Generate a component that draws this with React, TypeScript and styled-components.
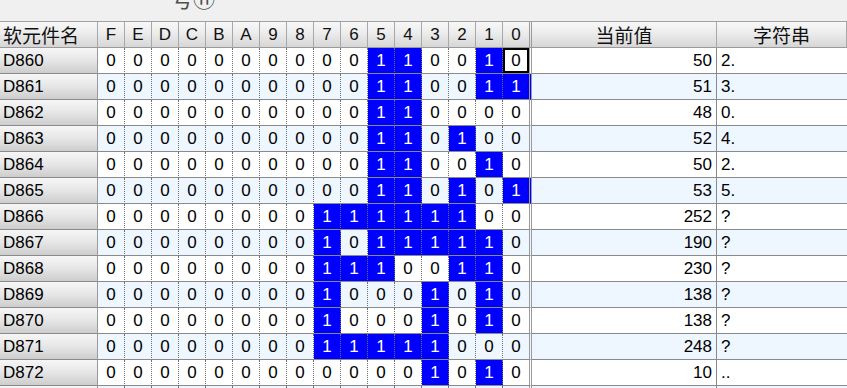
import React from "react";
import styled, { createGlobalStyle, css } from "styled-components";

const Global = createGlobalStyle`
  html, body { margin: 0; padding: 0; background: #f0f0f0; }
  body { font-family: "Liberation Sans", Arial, "Noto Sans CJK SC", sans-serif; overflow: hidden; }
`;

const Page = styled.div`
  width: 847px;
  height: 388px;
  overflow: hidden;
  display: flex;
  flex-direction: column;
`;

const TopStrip = styled.div`
  height: 21px;
  flex: 0 0 21px;
  overflow: hidden;
  background: #f0f0f0;
  border-bottom: 1px solid #a0a0a0;
`;

const Caption = styled.div`
  margin-top: -15px;
  padding-left: 171px;
  font-family: "Noto Sans CJK SC", sans-serif;
  font-size: 22px;
  line-height: 24px;
  color: #505050;
`;

const Grid = styled.div`
  display: grid;
  grid-template-columns: 98px repeat(15, 27px) 29px 185px 1fr;
  grid-auto-rows: 26px;
  background: #fff;
  font-size: 17px;
  color: #000;
`;

const headGrad = css`
  background: linear-gradient(#f8f8f8 0%, #ececec 45%, #d6d6d6 100%);
`;

const HeadCell = styled.div<{ $last?: boolean; $cjk?: boolean; $left?: boolean }>`
  ${headGrad};
  box-sizing: border-box;
  border-bottom: 1px solid #9a9a9a;
  border-right: ${(p) => (p.$last ? "3px double #9a9a9a" : "1px solid #a8a8a8")};
  display: flex;
  align-items: center;
  justify-content: ${(p) => (p.$left ? "flex-start" : "center")};
  padding-left: ${(p) => (p.$left ? "3px" : "0")};
  font-family: ${(p) =>
    p.$cjk ? `"Noto Sans CJK SC", sans-serif` : `"Liberation Sans", Arial, sans-serif`};
  font-size: ${(p) => (p.$cjk ? "19px" : "17px")};
  color: #111;
  white-space: nowrap;
  overflow: hidden;
`;

const LabelCell = styled.div`
  background: linear-gradient(#f6f6f6 0%, #e6e6e6 50%, #cdcdcd 100%);
  box-sizing: border-box;
  border-bottom: 1px solid #8a8a8a;
  border-right: 1px solid #9a9a9a;
  display: flex;
  align-items: center;
  padding-left: 3px;
`;

const BitCell = styled.div<{ $on: boolean; $alt: boolean; $last?: boolean; $sel?: boolean }>`
  box-sizing: border-box;
  background: ${(p) => (p.$on ? "#0000ff" : p.$alt ? "#eef6ff" : "#ffffff")};
  color: ${(p) => (p.$on ? "#ffffff" : "#000000")};
  border-bottom: 1px solid #8a8a8a;
  border-right: ${(p) => (p.$last ? "3px double #9a9a9a" : "1px dotted #707070")};
  display: flex;
  align-items: center;
  justify-content: center;
  box-shadow: ${(p) => (p.$sel ? "inset 0 0 0 2px #000" : "none")};
`;

const ValueCell = styled.div<{ $alt: boolean }>`
  box-sizing: border-box;
  background: ${(p) => (p.$alt ? "#eef6ff" : "#ffffff")};
  border-bottom: 1px solid #8a8a8a;
  border-right: 1px solid #8a8a8a;
  display: flex;
  align-items: center;
  justify-content: flex-end;
  padding-right: 4px;
`;

const StrCell = styled.div<{ $alt: boolean }>`
  box-sizing: border-box;
  background: ${(p) => (p.$alt ? "#eef6ff" : "#ffffff")};
  border-bottom: 1px solid #8a8a8a;
  display: flex;
  align-items: center;
  padding-left: 4px;
`;

const bitLabels = ["F", "E", "D", "C", "B", "A", "9", "8", "7", "6", "5", "4", "3", "2", "1", "0"];

type Row = { name: string; value: number | null; str: string };

const rows: Row[] = [
  { name: "D860", value: 50, str: "2." },
  { name: "D861", value: 51, str: "3." },
  { name: "D862", value: 48, str: "0." },
  { name: "D863", value: 52, str: "4." },
  { name: "D864", value: 50, str: "2." },
  { name: "D865", value: 53, str: "5." },
  { name: "D866", value: 252, str: "?" },
  { name: "D867", value: 190, str: "?" },
  { name: "D868", value: 230, str: "?" },
  { name: "D869", value: 138, str: "?" },
  { name: "D870", value: 138, str: "?" },
  { name: "D871", value: 248, str: "?" },
  { name: "D872", value: 10, str: ".." },
  { name: "", value: null, str: "" },
];

export default function App() {
  return (
    <Page>
      <Global />
      <TopStrip>
        <Caption>号⑪</Caption>
      </TopStrip>
      <Grid>
        <HeadCell $cjk $left>软元件名</HeadCell>
        {bitLabels.map((b, i) => (
          <HeadCell key={b} $last={i === 15}>
            {b}
          </HeadCell>
        ))}
        <HeadCell $cjk>当前值</HeadCell>
        <HeadCell $cjk>字符串</HeadCell>
        {rows.map((r, ri) => {
          const alt = ri % 2 === 1;
          return (
            <React.Fragment key={ri}>
              <LabelCell>{r.name}</LabelCell>
              {bitLabels.map((_, i) => {
                const bit = 15 - i;
                const on = r.value !== null && ((r.value >> bit) & 1) === 1;
                return (
                  <BitCell
                    key={i}
                    $on={on}
                    $alt={alt}
                    $last={i === 15}
                    $sel={ri === 0 && i === 15}
                  >
                    {r.value === null ? "" : on ? "1" : "0"}
                  </BitCell>
                );
              })}
              <ValueCell $alt={alt}>{r.value ?? ""}</ValueCell>
              <StrCell $alt={alt}>{r.str}</StrCell>
            </React.Fragment>
          );
        })}
      </Grid>
    </Page>
  );
}
